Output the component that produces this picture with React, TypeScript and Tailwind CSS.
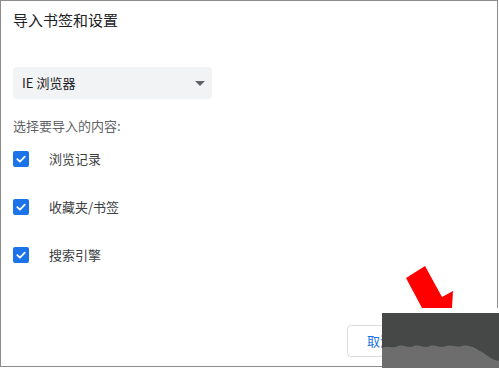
import React from 'react';

const items = ['浏览记录', '收藏夹/书签', '搜索引擎'];

const Check = () => (
    <div className="w-4 h-4 rounded-[2px] bg-[#1a73e8] flex items-center justify-center">
        <svg width="12" height="12" viewBox="0 0 12 12" fill="none">
            <path d="M2.3 6.2 L4.9 8.7 L9.8 3.6" stroke="white" strokeWidth="1.8" strokeLinecap="round" strokeLinejoin="round" />
        </svg>
    </div>
);

const App = () => {
    return (
        <div className="relative w-[499px] h-[368px] bg-white overflow-hidden font-['Noto_Sans_CJK_SC',sans-serif]">
            {/* Dialog */}
            <div className="w-[498px] h-[367px] border border-[#8f8b8b] flex flex-col pl-[12px] pt-[9px] pb-[9px] pr-[12px]">
                <div className="text-[15px] leading-[20px] text-[#202124]">导入书签和设置</div>

                {/* Browser select */}
                <div className="mt-[37px] w-[199px] h-8 rounded-[4px] bg-[#f1f3f4] flex items-center justify-between pl-[9px] pr-[7px]">
                    <span className="text-[13px] text-[#202124]">IE 浏览器</span>
                    <svg width="10" height="5" viewBox="0 0 10 5">
                        <path d="M0 0 L10 0 L5 5 Z" fill="#5f6368" />
                    </svg>
                </div>

                <div className="mt-[18px] text-[13px] leading-[18px] text-[#5f6368]">选择要导入的内容:</div>

                {/* Options */}
                <div className="flex flex-col">
                    {items.map((label) => (
                        <div key={label} className="h-12 flex items-center">
                            <Check />
                            <span className="ml-5 text-[13px] text-[#3c4043]">{label}</span>
                        </div>
                    ))}
                </div>

                <div className="flex-1"></div>

                {/* Footer */}
                <div className="flex justify-end gap-2">
                    <button className="h-8 px-[19px] rounded-[4px] border border-[#dadce0] bg-white text-[13px] text-[#1a73e8]">取消</button>
                    <button className="h-8 px-[19px] rounded-[4px] bg-[#1a73e8] text-[13px] text-white">导入</button>
                </div>
            </div>

            {/* Red arrow annotation */}
            <svg className="absolute left-0 top-0" width="499" height="368" viewBox="0 0 499 368">
                <polygon points="406,278 425,266 442,297 453,291 452,308 422,308" fill="#ff0000" />
            </svg>

            {/* Cropped overlay patch */}
            <div className="absolute left-[382px] top-[308px] w-[117px] h-[60px] bg-white flex flex-col">
                <div className="h-[5px]"></div>
                <svg width="117" height="55" viewBox="0 0 117 55">
                    <rect width="117" height="55" fill="#464848" />
                    <path d="M0 35 C6 32 10 36 16 33 C22 31 26 36 32 33 C38 31 42 36 48 33 C54 31 58 36 64 33 C70 31 74 35 80 33 C88 31 94 36 100 39 C106 43 110 47 117 48 L117 55 L0 55 Z" fill="#6d6d6e" />
                </svg>
            </div>
        </div>
    );
};

export default App;
